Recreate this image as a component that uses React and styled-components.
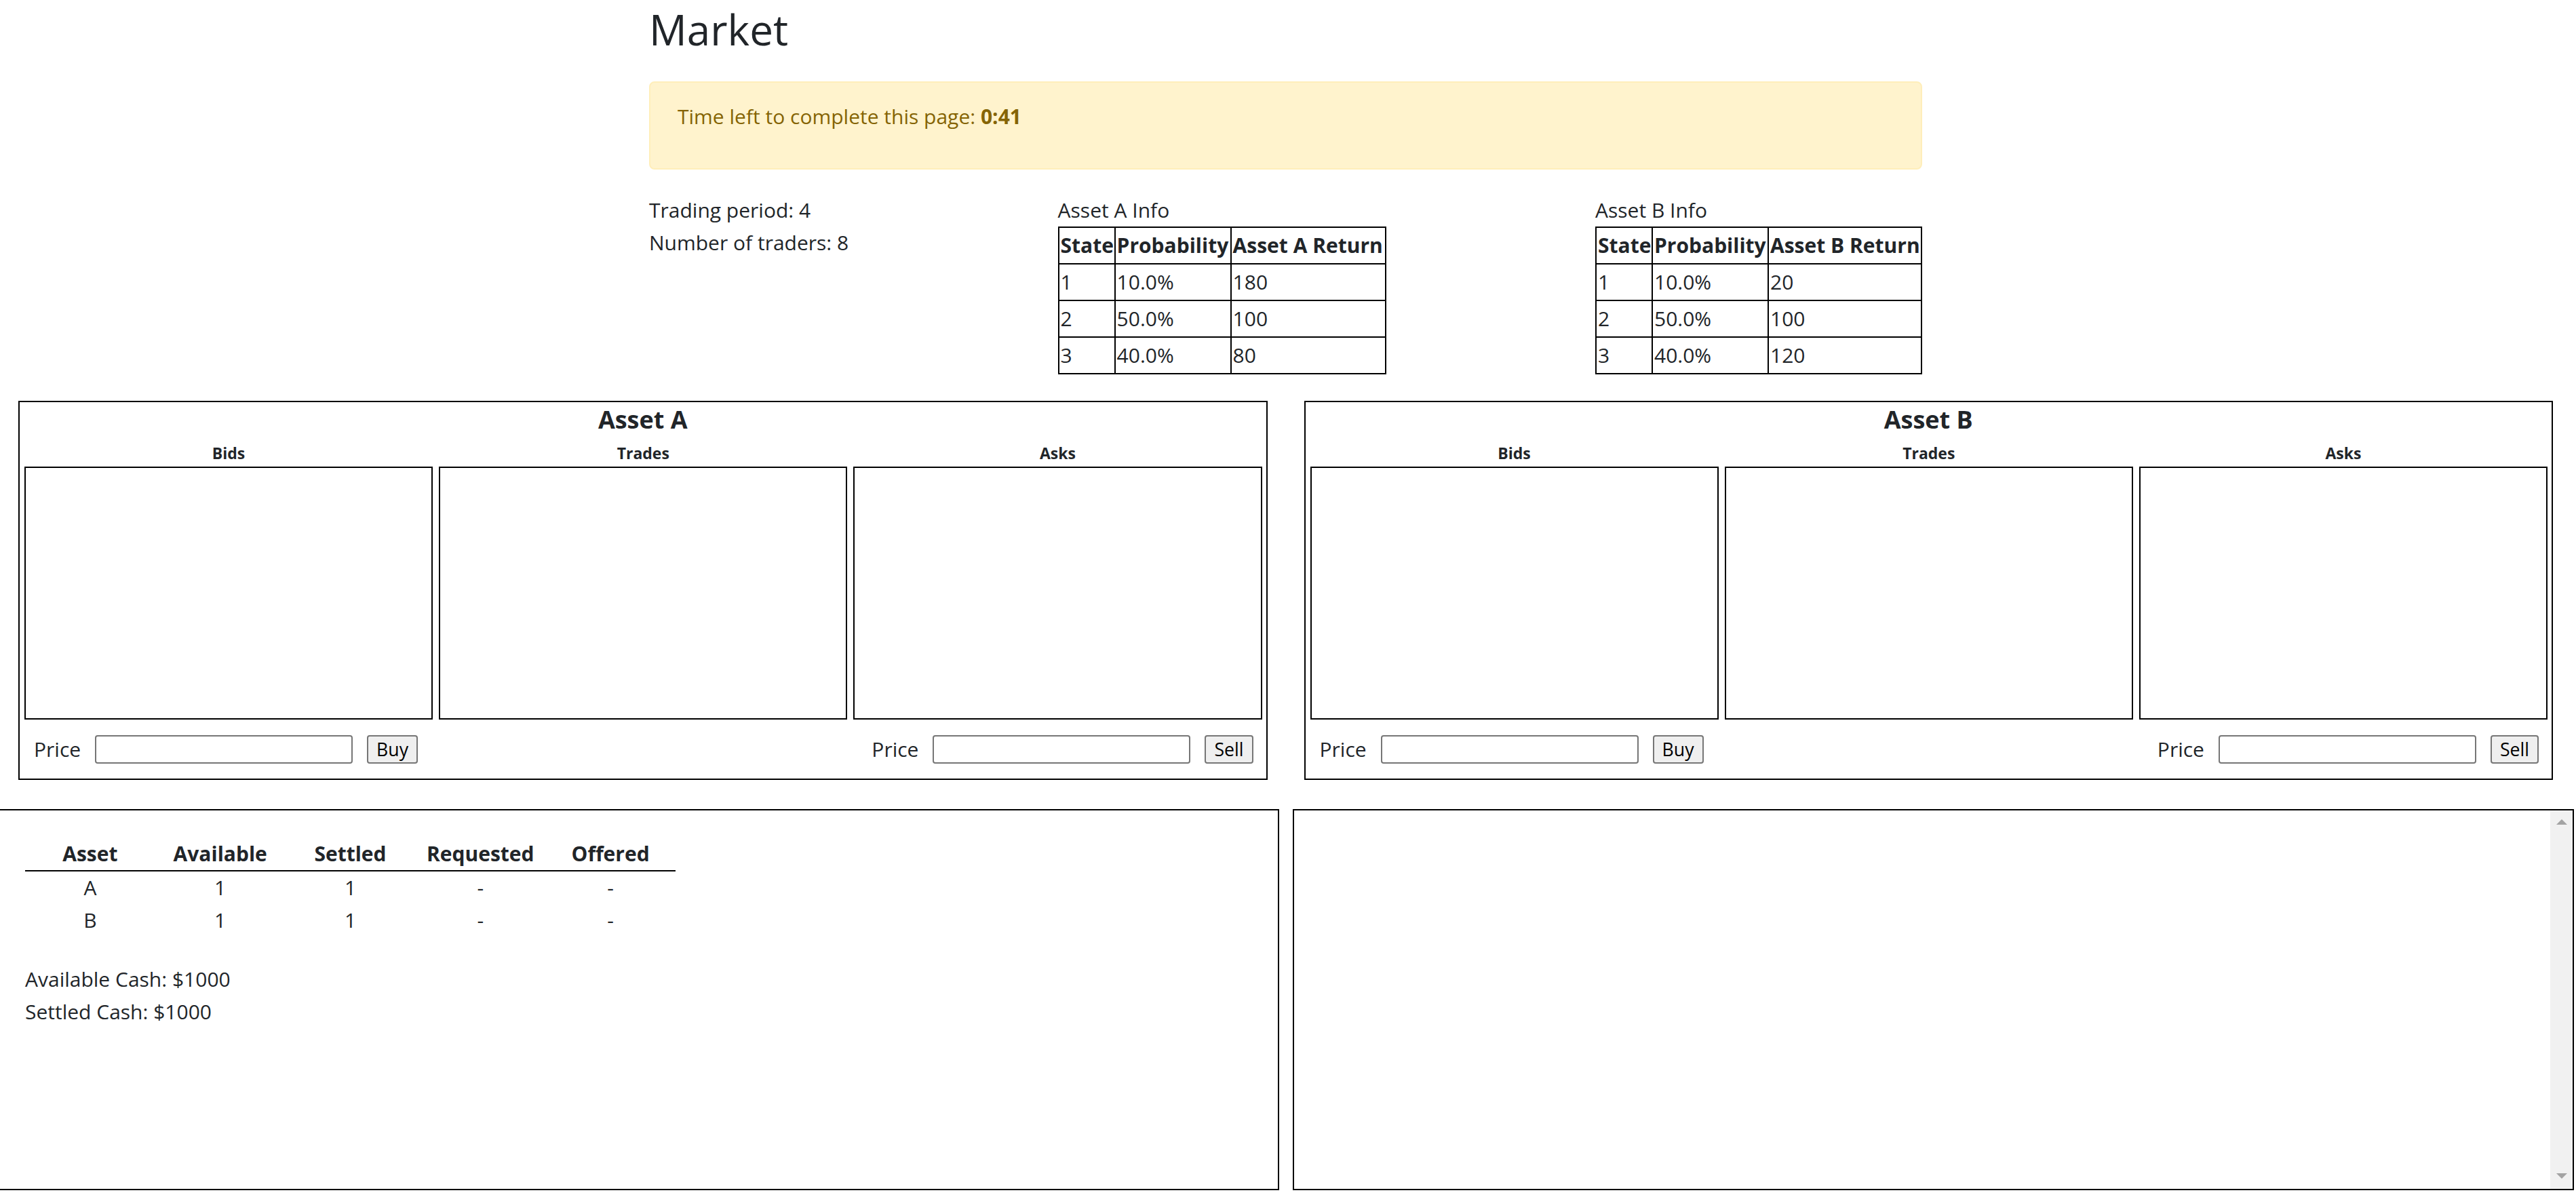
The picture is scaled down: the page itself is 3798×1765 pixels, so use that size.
import React from 'react'
import styled, { createGlobalStyle } from 'styled-components'

const GlobalStyle = createGlobalStyle`
  * { box-sizing: border-box; }
  html, body {
    margin: 0;
    padding: 0;
    background: #fff;
  }
  body {
    font-family: "Open Sans", "Noto Sans", sans-serif;
    font-size: 30px;
    line-height: 48px;
    color: #212529;
    overflow: hidden;
  }
`

const Container = styled.div`
  width: 1877px;
  margin-left: 957px;
`

const Title = styled.h2`
  margin: 0 0 40px;
  padding-top: 6px;
  font-size: 62px;
  font-weight: 500;
  line-height: 74px;
`

const Alert = styled.div`
  padding: 26px 40px 24px;
  margin-bottom: 36px;
  border: 2px solid #ffeeba;
  border-radius: 8px;
  background: #fff3cd;
  color: #856404;
`

const AlertText = styled.p`
  margin: 0 0 28px;
`

const InfoRow = styled.div`
  display: flex;
  justify-content: space-between;
  align-items: flex-start;
`

const InfoBlock = styled.div`
  display: flex;
  flex-direction: column;
`

const Table = styled.table`
  border-collapse: collapse;
  table-layout: fixed;
  width: ${props => props.width}px;

  th, td {
    border: 2px solid #000;
    padding: 2px 2px;
    text-align: left;
    line-height: 48px;
    white-space: nowrap;
  }
  th { font-weight: 700; }
`

const Market = styled.div`
  display: grid;
  grid-template-columns: 1fr 1fr;
  column-gap: 54px;
  padding: 0 34px 0 27px;
  margin-top: 39px;
`

const AssetBox = styled.div`
  border: 2px solid #000;
  padding: 4px 0 22px;
`

const AssetTitle = styled.div`
  text-align: center;
  font-size: 36px;
  font-weight: 700;
  line-height: 43px;
  margin-bottom: 16px;
`

const Columns = styled.div`
  display: grid;
  grid-template-columns: repeat(3, 1fr);
  column-gap: 9px;
  padding: 0 6px 0 7px;
`

const ColLabel = styled.div`
  text-align: center;
  font-size: 23px;
  font-weight: 700;
  line-height: 25px;
  margin-bottom: 7px;
`

const BookBox = styled.div`
  height: 373px;
  border: 2px solid #000;
`

const OrderRow = styled.div`
  display: flex;
  justify-content: space-between;
  align-items: center;
  height: 42px;
  margin-top: 23px;
  padding: 0 19px 0 21px;
`

const OrderForm = styled.div`
  display: flex;
  align-items: center;
  gap: 21px;
`

const PriceLabel = styled.span`
  font-size: 30px;
  line-height: 42px;
`

const PriceInput = styled.input`
  width: 380px;
  height: 42px;
  padding: 2px 4px;
  border: 2px solid #767676;
  border-radius: 4px;
  font-family: inherit;
  font-size: 26.67px;
`

const OrderButton = styled.button`
  height: 42px;
  padding: 0 12px;
  border: 2px solid #767676;
  border-radius: 4px;
  background: #efefef;
  color: #000;
  font-family: inherit;
  font-size: 26.67px;
  line-height: 38px;
`

const Bottom = styled.div`
  display: grid;
  grid-template-columns: 1886px 1889px;
  column-gap: 20px;
  margin-top: 43px;
`

const WalletBox = styled.div`
  height: 562px;
  border: 2px solid #000;
  border-left: none;
  padding: 40px 0 0 37px;
`

const HoldingsTable = styled.table`
  border-collapse: collapse;
  table-layout: fixed;
  width: 959px;
  margin-bottom: 39px;

  th, td {
    padding: 0;
    text-align: center;
    line-height: 48px;
  }
  th {
    font-weight: 700;
    border-bottom: 2px solid #000;
  }
`

const LogBox = styled.div`
  height: 562px;
  border: 2px solid #000;
  display: flex;
  justify-content: flex-end;
`

const ScrollRail = styled.div`
  width: 33px;
  background: #f1f1f1;
  display: flex;
  flex-direction: column;
  justify-content: space-between;
  align-items: center;
  padding: 13px 0 15px;
`

const Arrow = styled.div`
  width: 0;
  height: 0;
  border-left: 8px solid transparent;
  border-right: 8px solid transparent;
  ${props => props.down
    ? 'border-top: 8px solid #a3a3a3;'
    : 'border-bottom: 8px solid #a3a3a3;'}
`

const assets = [
  { name: 'A', returns: [180, 100, 80], width: 482, cols: [83, 171, 228] },
  { name: 'B', returns: [20, 100, 120], width: 480, cols: [83, 171, 226] },
]

const probs = ['10.0%', '50.0%', '40.0%']

const InfoTable = ({ asset }) => (
  <InfoBlock>
    <div>Asset {asset.name} Info</div>
    <Table width={asset.width}>
      <colgroup>
        {asset.cols.map((w, i) => <col key={i} style={{ width: w }} />)}
      </colgroup>
      <thead>
        <tr>
          <th>State</th>
          <th>Probability</th>
          <th>Asset {asset.name} Return</th>
        </tr>
      </thead>
      <tbody>
        {asset.returns.map((r, i) => (
          <tr key={i}>
            <td>{i + 1}</td>
            <td>{probs[i]}</td>
            <td>{r}</td>
          </tr>
        ))}
      </tbody>
    </Table>
  </InfoBlock>
)

const AssetMarket = ({ name }) => (
  <AssetBox>
    <AssetTitle>Asset {name}</AssetTitle>
    <Columns>
      {['Bids', 'Trades', 'Asks'].map(label => (
        <div key={label}>
          <ColLabel>{label}</ColLabel>
          <BookBox />
        </div>
      ))}
    </Columns>
    <OrderRow>
      <OrderForm>
        <PriceLabel>Price</PriceLabel>
        <PriceInput type="text" />
        <OrderButton>Buy</OrderButton>
      </OrderForm>
      <OrderForm>
        <PriceLabel>Price</PriceLabel>
        <PriceInput type="text" />
        <OrderButton>Sell</OrderButton>
      </OrderForm>
    </OrderRow>
  </AssetBox>
)

const App = () => {
  return (
    <>
      <GlobalStyle />
      <Container>
        <Title>Market</Title>
        <Alert>
          <AlertText>
            Time left to complete this page: <b>0:41</b>
          </AlertText>
        </Alert>
        <InfoRow>
          <div>
            <div>Trading period: 4</div>
            <div>Number of traders: 8</div>
          </div>
          {assets.map(a => <InfoTable key={a.name} asset={a} />)}
        </InfoRow>
      </Container>

      <Market>
        <AssetMarket name="A" />
        <AssetMarket name="B" />
      </Market>

      <Bottom>
        <WalletBox>
          <HoldingsTable>
            <thead>
              <tr>
                <th>Asset</th>
                <th>Available</th>
                <th>Settled</th>
                <th>Requested</th>
                <th>Offered</th>
              </tr>
            </thead>
            <tbody>
              {['A', 'B'].map(n => (
                <tr key={n}>
                  <td>{n}</td>
                  <td>1</td>
                  <td>1</td>
                  <td>-</td>
                  <td>-</td>
                </tr>
              ))}
            </tbody>
          </HoldingsTable>
          <div>Available Cash: $1000</div>
          <div>Settled Cash: $1000</div>
        </WalletBox>
        <LogBox>
          <ScrollRail>
            <Arrow />
            <Arrow down />
          </ScrollRail>
        </LogBox>
      </Bottom>
    </>
  )
}

export default App
